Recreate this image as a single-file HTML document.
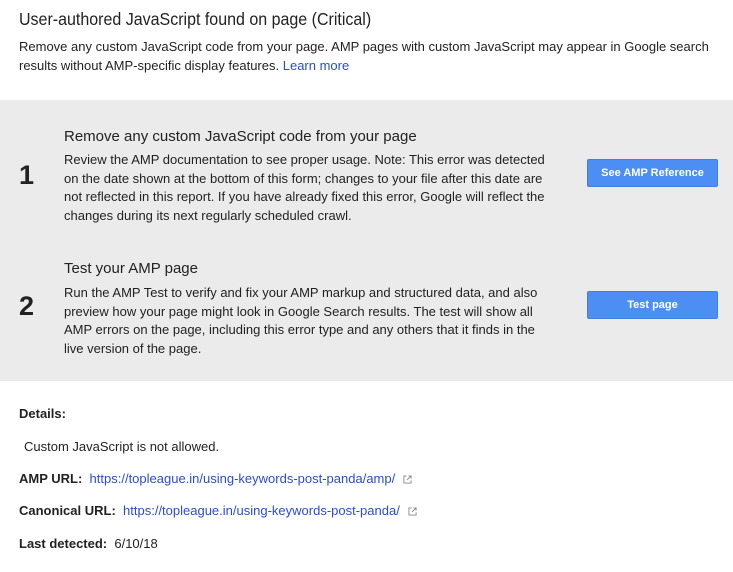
<!DOCTYPE html>
<html><head><style>
body{margin:0;width:733px;height:572px;background:#fff;font-family:"Liberation Sans",Arial,sans-serif;color:#222;position:relative;overflow:hidden}
.a{position:absolute;white-space:nowrap}
a{color:#2a4fc4;text-decoration:none}
.p{font-size:13px;line-height:18.5px;white-space:normal}
.num{font-size:27px;font-weight:bold;color:#222}
.btn{position:absolute;left:587px;width:131px;height:28px;background:#4d8ef5;border:1px solid #3f7fe6;box-sizing:border-box;border-radius:2px;color:#fff;font-size:11px;font-weight:bold;text-align:center;line-height:26px}
.ext{display:inline-block;width:9px;height:9px;vertical-align:-1px;margin-left:8px}
b{font-weight:bold}
</style></head><body>
<div class="a" style="left:19px;top:11px;font-size:16px;transform:scaleY(1.08);transform-origin:0 0;color:#222">User-authored JavaScript found on page (Critical)</div>
<div class="a p" style="left:19px;top:38px;width:710px">Remove any custom JavaScript code from your page. AMP pages with custom JavaScript may appear in Google search results without AMP-specific display features. <a>Learn more</a></div>
<div class="a" style="left:0;top:100px;width:733px;height:281px;background:#ebebeb"></div>
<div class="a num" style="left:19px;top:160px">1</div>
<div class="a" style="left:64px;top:128px;font-size:15px">Remove any custom JavaScript code from your page</div>
<div class="a p" style="left:64px;top:151px;width:485px">Review the AMP documentation to see proper usage. Note: This error was detected on the date shown at the bottom of this form; changes to your file after this date are not reflected in this report. If you have already fixed this error, Google will reflect the changes during its next regularly scheduled crawl.</div>
<div class="btn" style="top:159px">See AMP Reference</div>
<div class="a num" style="left:19px;top:291px">2</div>
<div class="a" style="left:64px;top:260px;font-size:15px">Test your AMP page</div>
<div class="a p" style="left:64px;top:284px;width:490px">Run the AMP Test to verify and fix your AMP markup and structured data, and also preview how your page might look in Google Search results. The test will show all AMP errors on the page, including this error type and any others that it finds in the live version of the page.</div>
<div class="btn" style="top:291px">Test page</div>
<div class="a" style="left:19px;top:406px;font-size:13px;font-weight:bold">Details:</div>
<div class="a" style="left:24px;top:439px;font-size:13px">Custom JavaScript is not allowed.</div>
<div class="a" style="left:19px;top:471px;font-size:13px"><b>AMP URL:</b>&nbsp; <a>https://topleague.in/using-keywords-post-panda/amp/</a><svg class="ext" viewBox="0 0 10 10"><path d="M4 1H1v8h8V6M6 1h3v3M9 1L4.5 5.5" fill="none" stroke="#888" stroke-width="1"/></svg></div>
<div class="a" style="left:19px;top:503px;font-size:13px"><b>Canonical URL:</b>&nbsp; <a>https://topleague.in/using-keywords-post-panda/</a><svg class="ext" viewBox="0 0 10 10"><path d="M4 1H1v8h8V6M6 1h3v3M9 1L4.5 5.5" fill="none" stroke="#888" stroke-width="1"/></svg></div>
<div class="a" style="left:19px;top:536px;font-size:13px"><b>Last detected:</b>&nbsp; 6/10/18</div>
</body></html>
